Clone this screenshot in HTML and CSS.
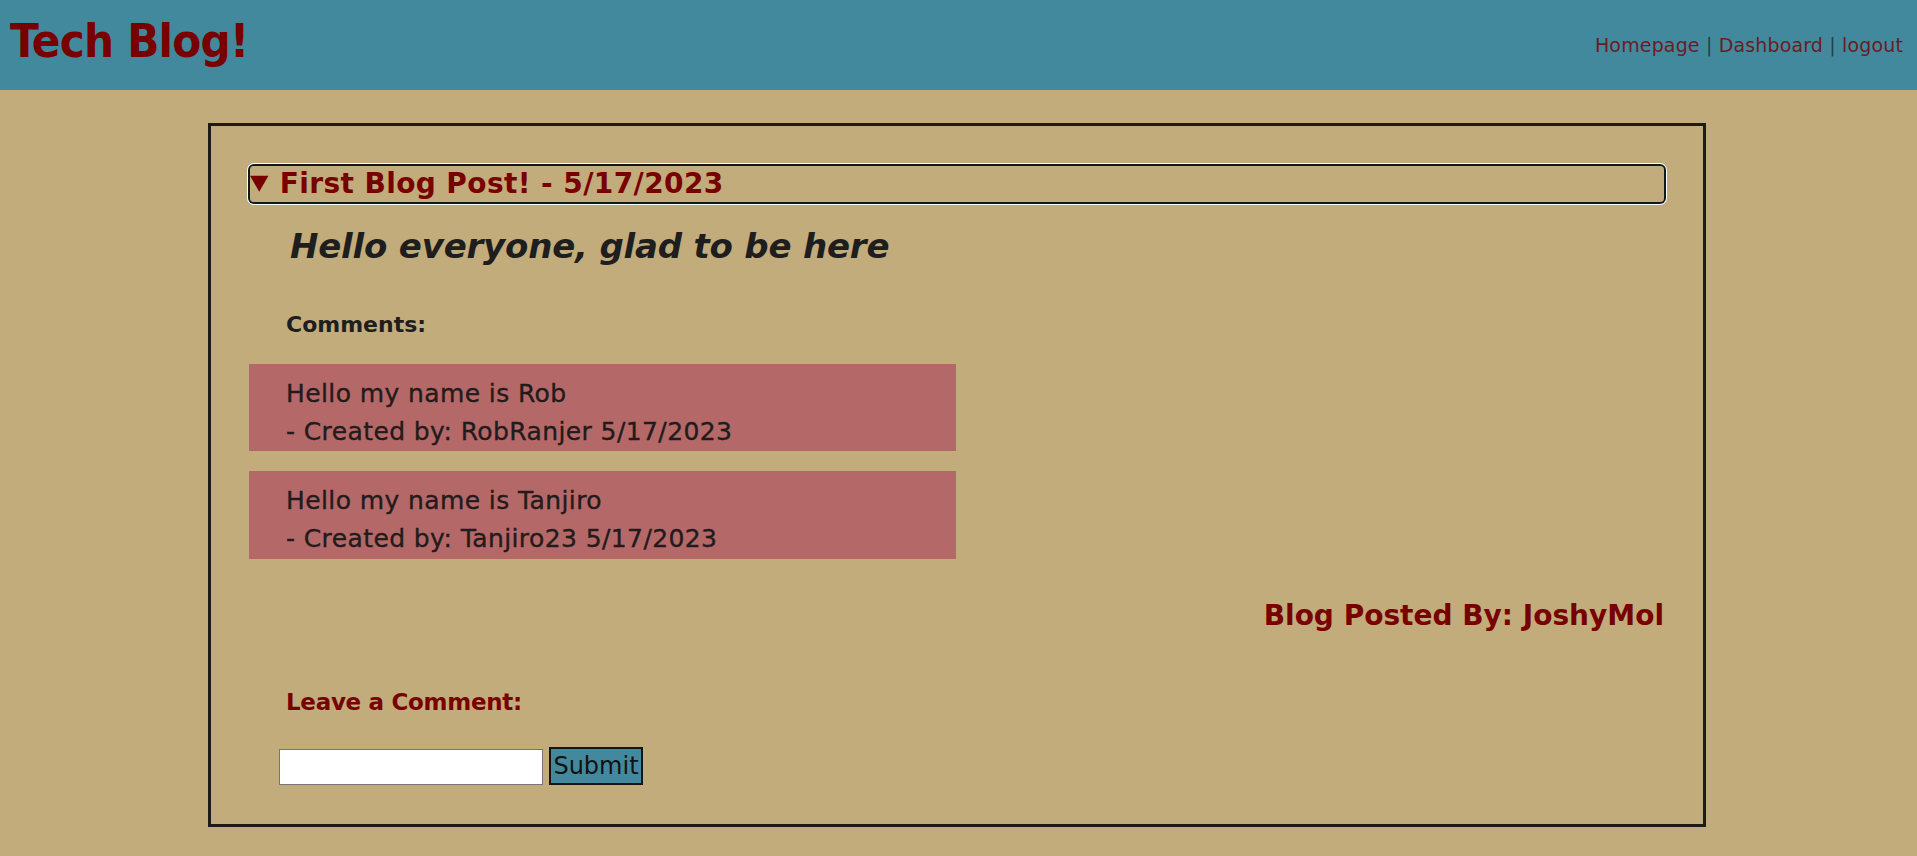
FILE: index.html
```html
<!DOCTYPE html>
<html lang="en">
<head>
<meta charset="utf-8">
<title>Tech Blog!</title>
<link rel="stylesheet" href="styles.css">
</head>
<body>
<header class="site-header">
  <h1 class="site-title">Tech Blog!</h1>
  <nav class="site-nav"><a class="nav-link" href="#">Homepage</a> | <a class="nav-link" href="#">Dashboard</a> | <a class="nav-link" href="#">logout</a></nav>
</header>
<main class="post-card">
  <details class="post" open>
    <summary class="post-title">First Blog Post! - 5/17/2023</summary>
    <h2 class="post-body">Hello everyone, glad to be here</h2>
    <h3 class="comments-label">Comments:</h3>
    <div class="comment">
      <p class="comment-line">Hello my name is Rob</p>
      <p class="comment-line">- Created by: RobRanjer 5/17/2023</p>
    </div>
    <div class="comment comment-next">
      <p class="comment-line">Hello my name is Tanjiro</p>
      <p class="comment-line">- Created by: Tanjiro23 5/17/2023</p>
    </div>
    <h3 class="post-author">Blog Posted By: JoshyMol</h3>
    <h4 class="leave-label">Leave a Comment:</h4>
    <form class="comment-form">
      <input class="comment-input" type="text">
      <button class="comment-submit" type="button">Submit</button>
    </form>
  </details>
</main>
</body>
</html>
```
FILE: styles.css
```css
html, body {
  margin: 0;
  padding: 0;
}
body {
  background: #c3ac7b;
  font-family: "DejaVu Sans", sans-serif;
  color: #1e1e1e;
  min-height: 856px;
}
.site-header {
  height: 90px;
  background: #43899e;
  display: flex;
  justify-content: space-between;
  align-items: flex-start;
}
.site-title {
  margin: 13px 0 0 10px;
  font-family: "DejaVu Sans Condensed", "DejaVu Sans", sans-serif;
  font-size: 47px;
  line-height: 56px;
  font-weight: bold;
  letter-spacing: -0.8px;
  color: #780000;
}
.site-nav {
  margin: 33px 14px 0 0;
  font-size: 19px;
  line-height: 24px;
  letter-spacing: 0.15px;
  color: #1f3f4a;
}
.nav-link {
  color: #6b1c24;
  text-decoration: none;
}
.post-card {
  box-sizing: border-box;
  width: 1498px;
  margin: 33px 0 0 208px;
  border: 3px solid #1c1b16;
  padding: 40px 39px 39px;
}
.post-title {
  font-size: 28px;
  line-height: 36px;
  font-weight: bold;
  letter-spacing: 0.4px;
  color: #780000;
  border-radius: 4px;
  box-shadow: 0 0 0 2px #101a1e, 0 0 0 3px #ffffff;
  cursor: pointer;
}
.post-body {
  margin: 24px 0 0 40px;
  font-size: 34px;
  line-height: 40px;
  font-style: italic;
  font-weight: bold;
  letter-spacing: -0.2px;
  color: #1e1e1e;
}
.comments-label {
  margin: 46px 0 0 36px;
  font-size: 22px;
  line-height: 26px;
  font-weight: bold;
  color: #1e1e1e;
}
.comment {
  box-sizing: border-box;
  width: 50%;
  height: 87px;
  margin: 26px 0 0 -1px;
  padding: 11px 0 0 37px;
  background: #b56868;
}
.comment-next {
  margin-top: 20px;
  height: 88px;
}
.comment-line {
  margin: 0;
  font-size: 25px;
  line-height: 38px;
  letter-spacing: 0.4px;
  color: #221b1b;
  -webkit-text-stroke: 0.35px #221b1b;
}
.post-author {
  margin: 39px 0 0;
  text-align: right;
  font-size: 28px;
  line-height: 36px;
  font-weight: bold;
  color: #780000;
}
.leave-label {
  margin: 54px 0 0 36px;
  font-size: 23px;
  line-height: 28px;
  font-weight: bold;
  letter-spacing: -0.3px;
  color: #780000;
}
.comment-form {
  display: flex;
  align-items: flex-end;
  gap: 6px;
  margin: 31px 0 0 29px;
}
.comment-input {
  box-sizing: border-box;
  width: 264px;
  height: 36px;
  margin: 0;
  border: 1px solid #767676;
  background: #ffffff;
  padding: 0 4px;
}
.comment-submit {
  box-sizing: border-box;
  width: 94px;
  height: 38px;
  margin: 0;
  padding: 0;
  border: 2px solid #151515;
  background: #43899e;
  font-family: "DejaVu Sans", sans-serif;
  font-size: 24px;
  color: #111111;
}
```
